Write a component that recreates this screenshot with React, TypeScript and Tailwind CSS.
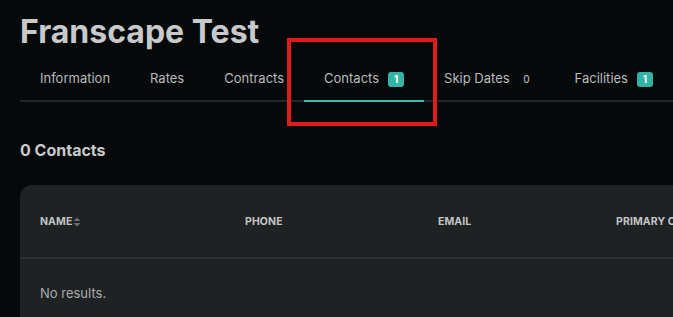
import { useState } from "react";

type Tab = { label: string; count?: number; filled?: boolean };

const tabs: Tab[] = [
  { label: "Information" },
  { label: "Rates" },
  { label: "Contracts" },
  { label: "Contacts", count: 1, filled: true },
  { label: "Skip Dates", count: 0 },
  { label: "Facilities", count: 1, filled: true },
];

const columns = ["Name", "Phone", "Email", "Primary Contact"];

const SortIcon = () => (
  <svg width="8" height="10" viewBox="0 0 8 10" className="ml-[1px]">
    <path d="M4 0.5 L7.5 4 H0.5 Z" fill="#6b6f71" />
    <path d="M4 9.5 L7.5 6 H0.5 Z" fill="#6b6f71" />
  </svg>
);

const App = () => {
  const [active, setActive] = useState("Contacts");

  return (
    <div
      className="relative h-[317px] w-[673px] overflow-hidden bg-[#05090a] text-[#c6c8c9]"
      style={{ fontFamily: "Inter, 'Noto Sans', sans-serif" }}
    >
      <div className="w-[900px] px-5 pt-[12px]">
        <h1 className="text-[32px] font-bold leading-[39px] text-[#c8c9ca]">
          Franscape Test
        </h1>

        <nav className="mt-[9px] flex border-b-2 border-[#232627]">
          {tabs.map((t) => {
            const on = t.label === active;
            return (
              <button
                key={t.label}
                onClick={() => setActive(t.label)}
                className={`-mb-[2px] flex h-[42px] items-center gap-[9px] px-5 pb-[2px] text-[13px] text-[#b9bbbc] ${
                  on ? "border-b-2 border-[#3bbcae]" : "border-b-2 border-transparent"
                }`}
              >
                {t.label}
                {t.count !== undefined && (
                  <span
                    className={`flex h-[15px] min-w-[16px] items-center justify-center rounded-[3px] text-[10px] ${
                      t.filled ? "bg-[#33b3a4] font-bold text-white" : "font-medium text-[#a9acad]"
                    }`}
                  >
                    {t.count}
                  </span>
                )}
              </button>
            );
          })}
        </nav>

        <h2 className="mt-[36px] text-[16px] font-bold leading-[24px] text-[#c8c9ca]">
          0 Contacts
        </h2>

        <div className="mt-[23px] rounded-[12px] bg-[#1f2223]">
          <div className="grid h-[74px] grid-cols-[205px_193px_178px_1fr] items-center border-b-2 border-[#2b2f30] px-5 pt-[2px]">
            {columns.map((c, i) => (
              <div
                key={c}
                className="flex items-center text-[10.5px] font-bold uppercase tracking-[0.1px] text-[#c3c5c6]"
              >
                {c}
                {i === 0 && <SortIcon />}
              </div>
            ))}
          </div>
          <div className="flex h-[70px] items-center px-5 text-[13px] text-[#a9acad]">
            No results.
          </div>
        </div>
      </div>

      <div className="absolute left-[287px] top-[38px] h-[88px] w-[150px] border-[4px] border-[#e01b1b]" />
    </div>
  );
};

export default App;
